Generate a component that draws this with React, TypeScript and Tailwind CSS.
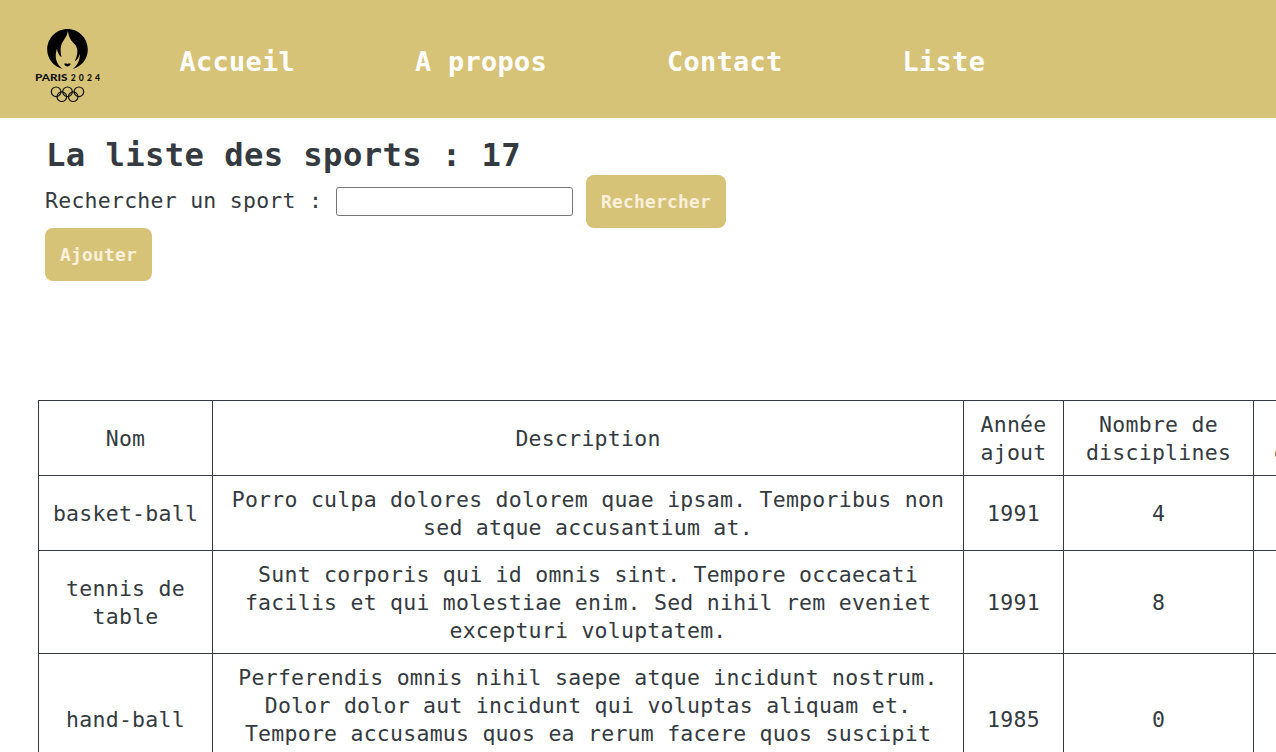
import React from "react";

const rows = [
  {
    name: ["basket-ball"],
    text: ["Porro culpa dolores dolorem quae ipsam. Temporibus non", "sed atque accusantium at."],
    year: 1991,
    count: 4,
    height: "h-[75px]",
  },
  {
    name: ["tennis de", "table"],
    text: [
      "Sunt corporis qui id omnis sint. Tempore occaecati",
      "facilis et qui molestiae enim. Sed nihil rem eveniet",
      "excepturi voluptatem.",
    ],
    year: 1991,
    count: 8,
    height: "h-[103px]",
  },
  {
    name: ["hand-ball"],
    text: [
      "Perferendis omnis nihil saepe atque incidunt nostrum.",
      "Dolor dolor aut incidunt qui voluptas aliquam et.",
      "Tempore accusamus quos ea rerum facere quos suscipit",
      "\u00a0",
    ],
    year: 1985,
    count: 0,
    height: "h-[131px]",
  },
];

const cell = "border border-[#343a40] p-0 pt-px text-center align-middle font-normal whitespace-nowrap";

function Lines({ items }: { items: string[] }) {
  return (
    <>
      {items.map((line) => (
        <span key={line} className="block">
          {line}
        </span>
      ))}
    </>
  );
}

function Logo() {
  return (
    <svg className="h-[78px] w-[70px] shrink-0" viewBox="0 0 70 78" aria-label="Paris 2024">
      <path
        d="M30.7 43.9C21.5 41.8 15.2 33.8 15.2 24.6C15.2 13 24.2 4 35.5 4S55.8 13 55.8 24.6C55.8 33.8 50 41.6 40.8 43.9C45.5 40.5 48.2 35 47.8 28.6C47 31.8 45.8 34.8 42.6 36.6C44 33.8 45.6 29.8 45.4 25.8C45 20 41 18.4 38.6 14.6C37 12 36.5 9.2 35.9 6C34.8 12.8 30.6 15.4 29.2 20.4C28.2 24.4 28.6 28 29.6 32.2C27 30.4 25.4 27.6 25 23.4C22.4 31.5 23.6 38.6 30.7 43.9Z"
        fill="#000"
      />
      <path
        d="M32.1 38.8C33.2 38.6 34.2 38.4 35.4 39C36.6 38.4 37.6 38.6 38.8 38.8C38.2 40.6 36.8 41.4 35.4 41.4S32.7 40.6 32.1 38.8Z"
        fill="#000"
      />
      <g fontSize="8.6" fontFamily="Lato" fontWeight="900" letterSpacing="0" fill="#111">
        <text x="3.1" y="56" textLength="32.4" lengthAdjust="spacingAndGlyphs">
          PARIS
        </text>
        <text x="38.8" y="56" textLength="29.2" lengthAdjust="spacing">
          2024
        </text>
      </g>
      <g fill="none" stroke="#111" strokeWidth="1.2">
        <circle cx="24.1" cy="66.8" r="4.8" />
        <circle cx="35.5" cy="66.8" r="4.8" />
        <circle cx="46.9" cy="66.8" r="4.8" />
        <circle cx="29.8" cy="71.7" r="4.8" />
        <circle cx="41.2" cy="71.7" r="4.8" />
      </g>
    </svg>
  );
}

const button =
  "flex h-[53px] items-center justify-center rounded-[8px] bg-[#d7c378] pt-px text-[17.9px] font-bold text-[#faf0dc]";

export default function App() {
  return (
    <div className="h-[752px] w-full overflow-hidden bg-white font-['DejaVu_Sans_Mono',monospace] text-[21.5px] leading-[28px] tracking-[0.0117em] text-[#343a40]">
      <header className="flex h-[118px] items-start bg-[#d7c378] pt-[25px] pl-8">
        <Logo />
        <nav className="flex gap-[120px] pt-[17px] pl-[77.5px] text-[26.9px] leading-[40px] font-bold tracking-[0.0117em] text-white">
          <a>Accueil</a>
          <a>A propos</a>
          <a>Contact</a>
          <a>Liste</a>
        </nav>
      </header>
      <main>
        <div className="h-[282px] pl-[45px]">
          <h1 className="h-[57px] pt-[16px] pl-px text-[32.25px] leading-[42px] font-bold tracking-[0.0117em]">
            La liste des sports : 17
          </h1>
          <div className="flex h-[53px] items-center">
            <label htmlFor="sport" className="w-[291px] pb-[2px] whitespace-nowrap">
              Rechercher un sport :
            </label>
            <input id="sport" className="h-[29px] w-[237px] rounded-[3px] border border-[#767676] bg-white" />
            <button className={button + " ml-[13px] w-[140px] tracking-[0.0117em]"}>Rechercher</button>
          </div>
          <button className={button + " w-[107px] tracking-[0.0117em]"}>Ajouter</button>
        </div>
        <table className="ml-[38px] w-[1360px] table-fixed border-collapse">
          <colgroup>
            <col className="w-[174px]" />
            <col className="w-[751px]" />
            <col className="w-[100px]" />
            <col className="w-[190px]" />
            <col className="w-[145px]" />
          </colgroup>
          <thead>
            <tr className="h-[75px]">
              <th className={cell}>Nom</th>
              <th className={cell}>Description</th>
              <th className={cell}>
                <Lines items={["Année", "ajout"]} />
              </th>
              <th className={cell}>
                <Lines items={["Nombre de", "disciplines"]} />
              </th>
              <th className={cell}>
                <Lines items={["Date", "création"]} />
              </th>
            </tr>
          </thead>
          <tbody>
            {rows.map((row) => (
              <tr key={row.name[0]} className={row.height}>
                <td className={cell}>
                  <Lines items={row.name} />
                </td>
                <td className={cell}>
                  <Lines items={row.text} />
                </td>
                <td className={cell}>{row.year}</td>
                <td className={cell}>{row.count}</td>
                <td className={cell}></td>
              </tr>
            ))}
          </tbody>
        </table>
      </main>
    </div>
  );
}
